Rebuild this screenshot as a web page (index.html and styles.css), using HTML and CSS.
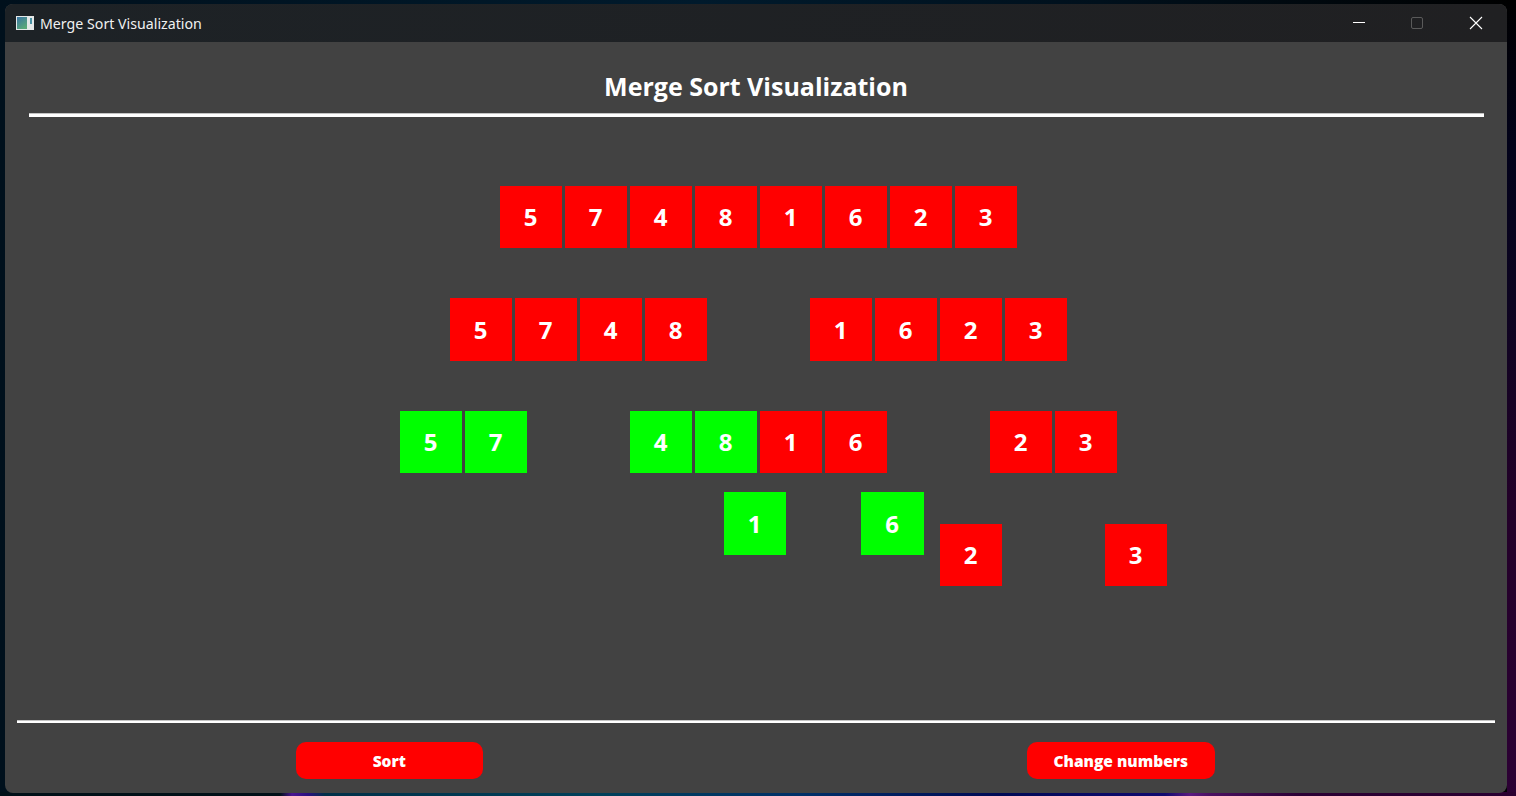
FILE: index.html
```html
<!DOCTYPE html>
<html lang="en">
<head>
    <meta charset="UTF-8">
    <title>Merge Sort Visualization</title>
    <link rel="stylesheet" href="styles.css">
</head>
<body>
    <div class="window">
        <!-- Title bar -->
        <div class="titlebar">
            <svg class="app-icon" width="18" height="14" viewBox="0 0 18 14">
                <defs>
                    <linearGradient id="iconFill" x1="0" y1="0" x2="0.6" y2="1">
                        <stop offset="0" stop-color="#3a74a4"></stop>
                        <stop offset="1" stop-color="#5aa878"></stop>
                    </linearGradient>
                </defs>
                <rect width="18" height="14" fill="#e4e8e8"></rect>
                <rect x="1" y="1" width="10" height="12" fill="url(#iconFill)"></rect>
                <rect x="14" y="2" width="2" height="6" fill="#4a92a4"></rect>
            </svg>
            <span class="window-title">Merge Sort Visualization</span>
            <div class="window-controls">
                <svg class="control" width="46" height="38" viewBox="0 0 46 38">
                    <line x1="18" y1="18.5" x2="30" y2="18.5" stroke="#fff" stroke-width="1"></line>
                </svg>
                <svg class="control" width="46" height="38" viewBox="0 0 46 38">
                    <rect x="17.5" y="13.5" width="11" height="11" rx="1.5" fill="none" stroke="#5a5a5a" stroke-width="1"></rect>
                </svg>
                <svg class="control" width="46" height="38" viewBox="0 0 46 38">
                    <path d="M17 13 L29 25 M29 13 L17 25" stroke="#fff" stroke-width="1.1" fill="none"></path>
                </svg>
            </div>
        </div>

        <div class="content">
            <h1 class="heading">Merge Sort Visualization</h1>
            <hr class="rule rule-top">

            <div class="stage">
                <div class="group g-root">
                    <div class="tile">5</div><div class="tile">7</div><div class="tile">4</div><div class="tile">8</div>
                    <div class="tile">1</div><div class="tile">6</div><div class="tile">2</div><div class="tile">3</div>
                </div>

                <div class="group g-left">
                    <div class="tile tall">5</div><div class="tile tall">7</div><div class="tile tall">4</div><div class="tile tall">8</div>
                </div>
                <div class="group g-right">
                    <div class="tile tall">1</div><div class="tile tall">6</div><div class="tile tall">2</div><div class="tile tall">3</div>
                </div>

                <div class="group g-ll">
                    <div class="tile done">5</div><div class="tile done">7</div>
                </div>
                <div class="group g-lr">
                    <div class="tile done">4</div><div class="tile done">8</div>
                </div>
                <div class="group g-rl">
                    <div class="tile">1</div><div class="tile">6</div>
                </div>
                <div class="group g-rr">
                    <div class="tile">2</div><div class="tile">3</div>
                </div>

                <div class="group g-leaf-1"><div class="tile tall done">1</div></div>
                <div class="group g-leaf-6"><div class="tile tall wide done">6</div></div>
                <div class="group g-leaf-2"><div class="tile">2</div></div>
                <div class="group g-leaf-3"><div class="tile">3</div></div>
            </div>

            <hr class="rule rule-bottom">
            <div class="actions">
                <button class="action-btn">Sort</button>
                <button class="action-btn">Change numbers</button>
            </div>
        </div>
    </div>
</body>
</html>
```

FILE: styles.css
```css
:root {
    --window-background: #424242;
    --title-background: #1f2124;
    --red: #ff0000;
    --green: #00ff00;
}

html, body {
    height: 100%;
}

body {
    margin: 0;
    overflow: hidden;
    font-family: "Open Sans", "Noto Sans", sans-serif;
    color: #fff;
    /* desktop wallpaper showing round the window */
    background-color: #00101c;
    background-image:
        linear-gradient(90deg, #001018 0, #001018 280px, #4a1590 292px, #2a1080 308px, #003048 325px, #00405a 600px, #003068 800px, #000a55 1000px, #100a70 1165px, #5a1a80 1190px, #4a1060 1210px, #2c0034 1300px, #2a0030 1516px),
        linear-gradient(180deg, #000 0, #02021a 150px, #0c0420 300px, #220028 500px, #2c0034 796px),
        linear-gradient(90deg, #00101c 0, #001a2c 700px, #00101c 1100px, #000 1516px);
    background-size: 100% 4px, 9px 100%, 100% 100%;
    background-position: left bottom, right top, left top;
    background-repeat: no-repeat;
    box-sizing: border-box;
    padding: 4px 9px 3px 5px;
}

.window {
    height: 100%;
    display: flex;
    flex-direction: column;
    border-radius: 8px;
    overflow: hidden;
    background-color: var(--window-background);
}

/* Title bar */
.titlebar {
    flex: none;
    height: 38px;
    display: flex;
    align-items: center;
    background: linear-gradient(90deg, #1d2226, #202022);
}

.app-icon {
    margin-left: 11px;
    margin-right: 6px;
}

.window-title {
    font-size: 14.2px;
    color: #f0f0f0;
    font-family: "Noto Sans", sans-serif;
}

.window-controls {
    margin-left: auto;
    display: flex;
    gap: 13px;
    margin-right: 8px;
}

/* Content */
.content {
    flex: 1;
    display: flex;
    flex-direction: column;
    min-height: 0;
}

.heading {
    margin: 26px 0 0 0;
    height: 45px;
    font-size: 25px;
    line-height: 36px;
    font-weight: 700;
    text-align: center;
}

.rule {
    border: none;
    margin: 0;
    background-color: #fff;
    flex: none;
}

.rule-top {
    height: 3px;
    border-top: 1px solid #c4c4c4;
    margin: 0 23px 0 24px;
}

.rule-bottom {
    height: 2px;
    border-top: 1px solid #c4c4c4;
    margin: 0 12px;
}

.stage {
    position: relative;
    flex: 1;
}

.group {
    position: absolute;
    display: flex;
    gap: 3px;
}

.tile {
    width: 62px;
    height: 62px;
    box-sizing: border-box;
    padding: 0 1px 2px 0;
    display: flex;
    align-items: center;
    justify-content: center;
    background-color: var(--red);
    font-size: 24px;
    font-weight: 700;
}

.tile.done {
    background-color: var(--green);
}

.tile.tall {
    height: 63px;
    padding-bottom: 1px;
}

.tile.wide {
    width: 63px;
}

/* Tree positions */
.g-root { left: 495px; top: 69px; }
.g-left { left: 445px; top: 181px; }
.g-right { left: 805px; top: 181px; }
.g-ll { left: 395px; top: 294px; }
.g-lr { left: 625px; top: 294px; }
.g-rl { left: 755px; top: 294px; }
.g-rr { left: 985px; top: 294px; }
.g-leaf-1 { left: 719px; top: 375px; }
.g-leaf-6 { left: 856px; top: 375px; }
.g-leaf-2 { left: 935px; top: 407px; }
.g-leaf-3 { left: 1100px; top: 407px; }

/* Buttons */
.actions {
    flex: none;
    height: 70px;
    box-sizing: border-box;
    padding: 19px 2px 0 0;
    display: flex;
    justify-content: center;
    align-items: flex-start;
    gap: 544px;
}

.action-btn {
    width: 187.5px;
    height: 37px;
    padding: 0;
    border: none;
    border-radius: 10px;
    background-color: var(--red);
    color: #fff;
    font-family: "Open Sans", "Noto Sans", sans-serif;
    font-size: 15.5px;
    font-weight: 800;
}
```
